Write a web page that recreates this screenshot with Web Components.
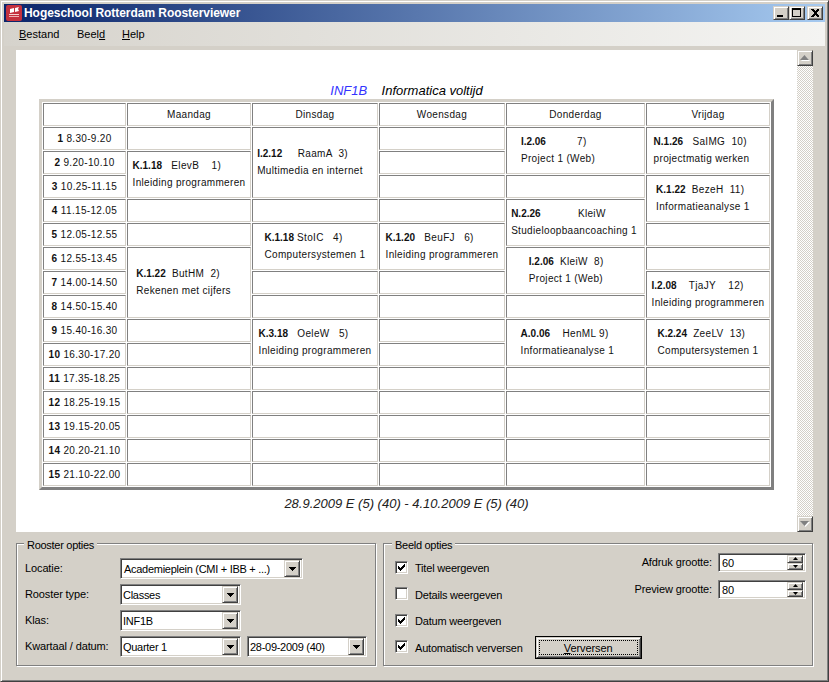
<!DOCTYPE html>
<html><head><meta charset="utf-8"><style>
html,body{margin:0;padding:0;background:#d4d0c8;overflow:hidden}
</style></head><body>
<app-window></app-window>
<script>
const def=(name,html,init)=>{customElements.define(name,class extends HTMLElement{
  constructor(){super();const r=this.attachShadow({mode:'open'});r.innerHTML=typeof html==='function'?html(this):html;}
});};
const FONT=`"Liberation Sans",Arial,sans-serif`;
const arrow=`<svg width="7" height="4" viewBox="0 0 7 4"><path d="M0 0h7L3.5 4z" fill="#000" shape-rendering="crispEdges"/></svg>`;
const raised=`background:#d4d0c8;border:1px solid;border-color:#d4d0c8 #404040 #404040 #d4d0c8;box-shadow:inset 1px 1px 0 #fff,inset -1px -1px 0 #808080;box-sizing:border-box;`;
const sunken=`background:#fff;border:1px solid;border-color:#808080 #fff #fff #808080;box-shadow:inset 1px 1px 0 #404040,inset -1px -1px 0 #d4d0c8;box-sizing:border-box;`;

def('win-btn',`<style>:host{display:flex;align-items:center;justify-content:center;width:16px;height:14px;${raised}}svg{display:block}</style><slot></slot>`);
def('title-bar',`<style>:host{display:flex;align-items:center;height:18px;background:linear-gradient(90deg,#0a246a,#a6caf0);color:#fff;font:bold 12px ${FONT};letter-spacing:-.05px;padding:0 2px;box-sizing:border-box;flex:none}
.t{margin-left:2px;white-space:nowrap;flex:1}.b{display:flex}.gap{width:2px}
</style>
<svg width="16" height="16" viewBox="0 0 16 16"><rect width="16" height="16" rx="2" fill="#c4303e"/><path d="M4 4l4-1v4l-4 1zM9 3l4-1-1 2 1 2-4 1z" fill="#fff"/><rect x="3" y="9" width="10" height="1" fill="#f5d0d0"/><rect x="3" y="11" width="10" height="1" fill="#eeb0b4"/></svg>
<span class="t">Hogeschool Rotterdam Roosterviewer</span>
<div class="b"><win-btn><svg width="10" height="10" viewBox="0 0 10 10"><rect x="1" y="7" width="6" height="2"/></svg></win-btn>
<win-btn><svg width="10" height="10" viewBox="0 0 10 10" shape-rendering="crispEdges"><path d="M0 0h9v9H0zM1 2v6h7V2z" fill-rule="evenodd"/></svg></win-btn><span class="gap"></span>
<win-btn><svg width="10" height="10" viewBox="0 0 10 10" shape-rendering="crispEdges"><path d="M1 1h2l2 2 2-2h2v1L6 5l3 3v1H7L5 7 3 9H1V8l3-3-3-3z"/></svg></win-btn></div>`);
def('menu-bar',`<style>:host{display:flex;height:24px;align-items:center;flex:none;background:linear-gradient(90deg,#d6d3cc,#f4f4f2);font:11px ${FONT};color:#000;padding-left:15px;box-sizing:border-box}
span{display:block}u{text-decoration:underline}.a{width:58px}.b{width:45px}</style>
<span class="a"><u>B</u>estand</span><span class="b">Beel<u>d</u></span><span><u>H</u>elp</span>`);

def('tt-cell',`<style>:host{display:flex;align-items:center;justify-content:center;box-sizing:border-box;border:1px solid;border-color:#808080 #d4d0c8 #d4d0c8 #808080;background:#fff;color:#111;font:10px ${FONT};letter-spacing:.33px;white-space:pre;min-width:0}
div{line-height:17px}</style><div><slot></slot></div>`);
def('tt-lesson',(el)=>`<style>:host{display:block;white-space:pre;padding-bottom:2px}b{font-weight:bold;letter-spacing:0}</style><div><b>${el.getAttribute('room')}</b>${el.getAttribute('rest')}</div><div>${el.getAttribute('name')}</div>`);

const hours=["8.30-9.20","9.20-10.10","10.25-11.15","11.15-12.05","12.05-12.55","12.55-13.45","14.00-14.50","14.50-15.40","15.40-16.30","16.30-17.20","17.35-18.25","18.25-19.15","19.15-20.05","20.20-21.10","21.10-22.00"];
const L=(span,room,rest,name)=>({span,room,rest,name});
const days=[
 ["Maandag",[1,L(2,'K.1.18','   ElevB    1) ','Inleiding programmeren'),1,1,L(3,'K.1.22','  ButHM  2)       ','Rekenen met cijfers'),1,1,1,1,1,1,1]],
 ["Dinsdag",[L(3,'I.2.12','     RaamA  3)        ','Multimedia en internet'),1,L(2,'K.1.18',' StoIC   4)','Computersystemen 1'),1,1,L(2,'K.3.18','   OeleW   5)','Inleiding programmeren'),1,1,1,1,1]],
 ["Woensdag",[1,1,1,1,L(2,'K.1.20','   BeuFJ   6)','Inleiding programmeren'),1,1,1,1,1,1,1,1,1]],
 ["Donderdag",[L(2,'I.2.06','          7)              ','Project 1 (Web)'),1,L(2,'N.2.26','            KleiW           ','Studieloopbaancoaching 1'),L(2,'I.2.06','  KleiW  8)      ','Project 1 (Web)'),1,L(2,'A.0.06','    HenML 9)       ','Informatieanalyse 1'),1,1,1,1,1]],
 ["Vrijdag",[L(2,'N.1.26','   SaIMG  10)     ','projectmatig werken'),L(2,'K.1.22','  BezeH  11)     ','Informatieanalyse 1'),1,1,L(2,'I.2.08','    TjaJY    12)','Inleiding programmeren'),L(2,'K.2.24','  ZeeLV  13)','Computersystemen 1'),1,1,1,1,1]]
];
def('tt-table',()=>{
 let h=`<style>:host{display:grid;grid-auto-flow:column;grid-template-rows:repeat(16,23px);grid-template-columns:83px 124px 126px 126px 139px 124px;gap:1px;padding:1px;border:3px solid;border-color:#d4d0c8 #808080 #808080 #d4d0c8;background:#fff;flex:none}</style>`;
 h+=`<tt-cell></tt-cell>`+hours.map((t,i)=>`<tt-cell><b style="font-weight:bold">${i+1}</b> ${t}</tt-cell>`).join('');
 for(const [d,cells] of days){
  h+=`<tt-cell>${d}</tt-cell>`;
  for(const c of cells){
   if(c===1)h+=`<tt-cell></tt-cell>`;
   else h+=`<tt-cell style="grid-row:span ${c.span}"><tt-lesson room="${c.room}" rest="${c.rest}" name="${c.name}"></tt-lesson></tt-cell>`;
  }
 }
 return h;
});
def('v-scroll',`<style>:host{display:flex;flex-direction:column;width:16px;flex:none;background-color:#fff;background-image:conic-gradient(#d4d0c8 25%,#fff 0 50%,#d4d0c8 0 75%,#fff 0);background-size:2px 2px;justify-content:space-between}
.b{width:16px;height:16px;display:flex;align-items:center;justify-content:center;${raised}}</style>
<div class="b"><svg width="10" height="6" viewBox="0 0 10 6"><path d="M5.5 1L10 6H1z" fill="#fff"/><path d="M4.5 0L9 5H0z" fill="#808080"/></svg></div>
<div class="b"><svg width="10" height="6" viewBox="0 0 10 6"><path d="M1 1h9L5.5 6z" fill="#fff"/><path d="M0 0h9L4.5 5z" fill="#808080"/></svg></div>`);
def('schedule-view',`<style>:host{display:flex;height:482px;background:#fff;flex:none}
.m{flex:1;display:flex;flex-direction:column;align-items:center;min-width:0;padding-top:33px;box-sizing:border-box}
h1,p{margin:0;font:italic 13px ${FONT};white-space:pre}
h1{height:16px;line-height:16px;color:#000}h1 i{color:#3333ff}
p{margin-top:6px;line-height:16px;color:#222}</style>
<div class="m"><h1><i>INF1B</i>    Informatica voltijd</h1><tt-table></tt-table><p>28.9.2009 E (5) (40) - 4.10.2009 E (5) (40)</p></div><v-scroll></v-scroll>`);

def('group-box',(el)=>`<style>:host{display:block;position:relative;box-sizing:border-box;height:123px;border:1px solid #808080;box-shadow:1px 1px 0 #fff,inset 1px 1px 0 #fff;font:11px ${FONT};letter-spacing:-.12px;color:#000}
.l{position:absolute;left:${el.getAttribute('lx')||8}px;top:-5px;padding:0 3px;background:#d4d0c8;line-height:13px;white-space:nowrap;letter-spacing:-.28px}</style>
<span class="l">${el.getAttribute('label')}</span><slot></slot>`);
def('combo-box',(el)=>`<style>:host{display:flex;height:21px;width:${el.getAttribute('w')}px;${sunken}font:11px ${FONT};letter-spacing:-.28px;padding:2px;align-items:center}
span{flex:1;padding-left:${el.getAttribute('pl')||0}px;white-space:nowrap;overflow:hidden}.a{width:16px;height:17px;display:flex;align-items:center;justify-content:center;${raised}}</style>
<span>${el.getAttribute('v')}</span><div class="a">${arrow}</div>`);
def('check-row',(el)=>`<style>:host{display:flex;align-items:center;font:11px ${FONT};letter-spacing:-.2px;height:21px}
.c{width:13px;height:13px;margin:-2px 7px 0 0;display:flex;align-items:center;justify-content:center;${sunken}}span{white-space:nowrap}svg{display:block}</style>
<div class="c">${el.hasAttribute('on')?`<svg width="7" height="7" viewBox="0 0 7 7" shape-rendering="crispEdges"><path d="M0 2h1v1h1v1h1V3h1V2h1V1h1V0h1v3H6v1H5v1H4v1H3v1H2V6H1V5H0z"/></svg>`:''}</div><span>${el.getAttribute('t')}</span>`);
def('spin-box',(el)=>`<style>:host{display:flex;width:88px;height:19px;${sunken}padding:2px;font:11px ${FONT};letter-spacing:-.1px;align-items:center}
span{flex:1;padding-left:1px}.s{width:16px;display:flex;flex-direction:column;height:15px}
.s div{flex:1;display:flex;align-items:center;justify-content:center;${raised}}svg{display:block}</style>
<span>${el.getAttribute('v')}</span><div class="s"><div><svg width="5" height="3" viewBox="0 0 5 3"><path d="M2.5 0L5 3H0z"/></svg></div><div><svg width="5" height="3" viewBox="0 0 5 3"><path d="M0 0h5L2.5 3z"/></svg></div></div>`);
def('push-btn',(el)=>`<style>:host{display:flex;flex:none;width:107px;height:23px;box-sizing:border-box;border:1px solid #000;font:11px ${FONT};letter-spacing:-.1px}
.i{flex:1;display:flex;${raised}padding:2px}.f{flex:1;border:1px dotted #000;display:flex;align-items:center;justify-content:center}</style>
<div class="i"><div class="f"><span><u>V</u>erversen</span></div></div>`);
def('rooster-opties',`<style>:host{display:block;width:360px;flex:none}
.g{display:grid;grid-template-columns:95px auto;grid-auto-rows:21px;row-gap:5px;padding:14px 0 0 8px;align-items:center;justify-content:start}
.g>span{padding-bottom:2px;white-space:nowrap}.p{display:flex;gap:6px}</style>
<group-box label="Rooster opties" lx="7"><div class="g">
<span>Locatie:</span><combo-box w="183" pl="1" v="Academieplein (CMI + IBB + ...)"></combo-box>
<span>Rooster type:</span><combo-box w="121" v="Classes"></combo-box>
<span>Klas:</span><combo-box w="121" v="INF1B"></combo-box>
<span>Kwartaal / datum:</span><div class="p"><combo-box w="121" v="Quarter 1"></combo-box><combo-box w="120" v="28-09-2009 (40)"></combo-box></div>
</div></group-box>`);
def('beeld-opties',`<style>:host{display:block;width:430px;flex:none}
.w{display:flex;justify-content:space-between;padding:0 6px 0 11px}
.l{display:flex;flex-direction:column;row-gap:5.5px;padding-top:13.5px}
.r{display:grid;grid-template-columns:auto 88px;grid-auto-rows:19px;row-gap:8px;column-gap:6px;padding-top:9px;margin-left:-12px;align-items:center;justify-items:end;align-content:start}
.r>span{white-space:nowrap;padding-bottom:2px}
.row{display:flex;align-items:center;gap:12px;height:21px}</style>
<group-box label="Beeld opties"><div class="w"><div class="l">
<check-row on t="Titel weergeven"></check-row><check-row t="Details weergeven"></check-row><check-row on t="Datum weergeven"></check-row>
<div class="row"><check-row on t="Automatisch verversen"></check-row><push-btn></push-btn></div></div>
<div class="r"><span>Afdruk grootte:</span><spin-box v="60"></spin-box><span>Preview grootte:</span><spin-box v="80"></spin-box></div>
</div></group-box>`);
def('app-window',`<style>:host{display:flex;flex-direction:column;width:829px;height:682px;box-sizing:border-box;background:#d4d0c8;border:1px solid;border-color:#d4d0c8 #404040 #404040 #d4d0c8;box-shadow:inset 1px 1px 0 #fff,inset -1px -1px 0 #808080;padding:3px;font:11px ${FONT}}
.b{display:flex;flex-direction:column;padding:4px 12px 0 12px}.g{display:flex;gap:7px;margin-top:11px}</style>
<title-bar></title-bar><menu-bar></menu-bar>
<div class="b"><schedule-view></schedule-view><div class="g"><rooster-opties></rooster-opties><beeld-opties></beeld-opties></div></div>`);
</script></body></html>
